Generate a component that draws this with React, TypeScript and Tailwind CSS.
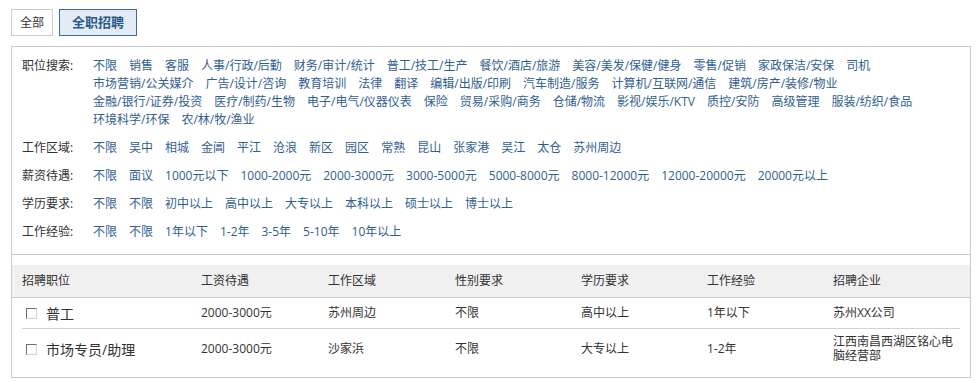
const jobLines: string[][] = [
  ['不限', '销售', '客服', '人事/行政/后勤', '财务/审计/统计', '普工/技工/生产', '餐饮/酒店/旅游', '美容/美发/保健/健身', '零售/促销', '家政保洁/安保', '司机'],
  ['市场营销/公关媒介', '广告/设计/咨询', '教育培训', '法律', '翻译', '编辑/出版/印刷', '汽车制造/服务', '计算机/互联网/通信', '建筑/房产/装修/物业'],
  ['金融/银行/证券/投资', '医疗/制药/生物', '电子/电气/仪器仪表', '保险', '贸易/采购/商务', '仓储/物流', '影视/娱乐/KTV', '质控/安防', '高级管理', '服装/纺织/食品'],
  ['环境科学/环保', '农/林/牧/渔业'],
];

const filters: { label: string; lines: string[][] }[] = [
  { label: '职位搜索:', lines: jobLines },
  { label: '工作区域:', lines: [['不限', '吴中', '相城', '金阊', '平江', '沧浪', '新区', '园区', '常熟', '昆山', '张家港', '吴江', '太仓', '苏州周边']] },
  { label: '薪资待遇:', lines: [['不限', '面议', '1000元以下', '1000-2000元', '2000-3000元', '3000-5000元', '5000-8000元', '8000-12000元', '12000-20000元', '20000元以上']] },
  { label: '学历要求:', lines: [['不限', '不限', '初中以上', '高中以上', '大专以上', '本科以上', '硕士以上', '博士以上']] },
  { label: '工作经验:', lines: [['不限', '不限', '1年以下', '1-2年', '3-5年', '5-10年', '10年以上']] },
];

const headers = ['招聘职位', '工资待遇', '工作区域', '性别要求', '学历要求', '工作经验', '招聘企业'];

const jobs = [
  { title: '普工', salary: '2000-3000元', area: '苏州周边', gender: '不限', edu: '高中以上', exp: '1年以下', company: '苏州XX公司', h: 'h-[31px]' },
  { title: '市场专员/助理', salary: '2000-3000元', area: '沙家浜', gender: '不限', edu: '大专以上', exp: '1-2年', company: '江西南昌西湖区铭心电脑经营部', h: 'h-[40px]' },
];

const cols = 'grid grid-cols-[179px_127px_127px_126px_126px_126px_1fr]';

export default function App() {
  return (
    <div className="w-[978px] h-[382px] bg-white font-['Open_Sans','Noto_Sans_CJK_SC',sans-serif] text-[12px] text-[#333]">
      {/* tabs */}
      <div className="flex gap-[6px] pl-[11px] pt-[9px]">
        <div className="h-[27px] px-[8px] border border-[#cccccc] flex items-center text-[12px] text-[#333]">全部</div>
        <div className="h-[27px] px-[12px] border border-[#3d6a97] bg-[#e3ebf4] flex items-center text-[13px] font-bold text-[#2b5b8b]">全职招聘</div>
      </div>

      <div className="ml-[11px] mt-[10px] w-[960px] h-[332px] border border-[#cccccc]">
        {/* filters */}
        <div className="border-b border-[#cccccc] pt-[10px] pb-[13px] pl-[10px]">
          {filters.map((f) => (
            <div key={f.label} className="flex mb-[10px] last:mb-0">
              <div className="w-[71px] shrink-0 leading-[18px] text-[#333]">{f.label}</div>
              <div className="flex flex-col">
                {f.lines.map((line, i) => (
                  <div key={i} className="flex gap-x-[12px] leading-[18px]">
                    {line.map((item, j) => (
                      <a key={j} href="#" className="text-[#2f6094] whitespace-nowrap">{item}</a>
                    ))}
                  </div>
                ))}
              </div>
            </div>
          ))}
        </div>

        {/* table */}
        <div className="mt-[10px]">
          <div className="bg-[#f0f0f0] border-b border-[#cccccc] h-[33px] px-[10px]">
            <div className={`${cols} h-full items-center`}>
              {headers.map((h) => (
                <div key={h}>{h}</div>
              ))}
            </div>
          </div>
          <div className="mx-[10px]">
            {jobs.map((j, i) => (
              <div key={i} className={`${cols} ${j.h} items-center ${i < jobs.length - 1 ? 'border-b border-[#cdd6de]' : ''}`}>
                <div className="flex items-center gap-[9px] pl-[4px]">
                  <span className="w-[11px] h-[11px] border border-t-[#6f6f6f] border-l-[#6f6f6f] border-r-[#d6d3cc] border-b-[#d6d3cc] bg-white" />
                  <span className="text-[14px] text-[#333]">{j.title}</span>
                </div>
                <div>{j.salary}</div>
                <div>{j.area}</div>
                <div>{j.gender}</div>
                <div>{j.edu}</div>
                <div>{j.exp}</div>
                <div className="leading-[14px] pr-[4px]">{j.company}</div>
              </div>
            ))}
          </div>
        </div>
      </div>
    </div>
  );
}
